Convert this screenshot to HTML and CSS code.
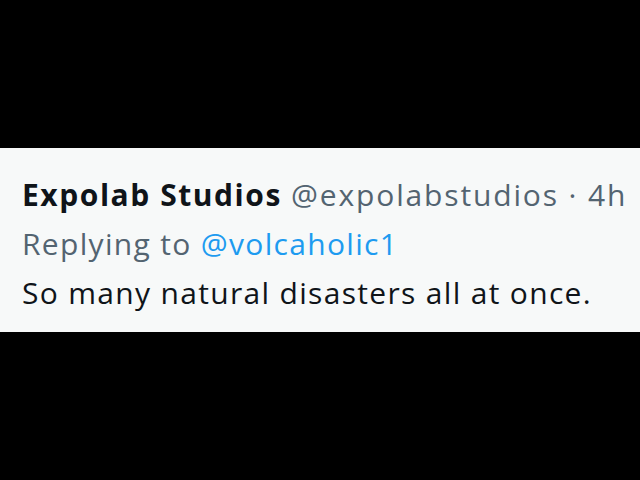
FILE: index.html
```html
<!DOCTYPE html>
<html>
<head>
<meta charset="utf-8">
<link rel="stylesheet" href="styles.css">
</head>
<body>
<main class="stage">
  <article class="tweet">
    <div class="line head"><span class="name">Expolab Studios</span> <span class="meta">@expolabstudios · 4h</span></div>
    <div class="line reply">Replying to <span class="mention">@volcaholic1</span></div>
    <div class="line text">So many natural disasters all at once.</div>
  </article>
</main>
</body>
</html>
```

FILE: styles.css
```css
html, body {
  margin: 0;
  padding: 0;
  background: #000;
}
.stage {
  width: 640px;
  height: 480px;
  display: flex;
  flex-direction: column;
  justify-content: flex-start;
  padding-top: 148px;
  box-sizing: border-box;
}
.tweet {
  background: #f7f9f9;
  height: 184px;
  box-sizing: border-box;
  padding: 22px 0 0 22px;
  font-family: "Open Sans", "Liberation Sans", sans-serif;
  font-size: 30px;
  letter-spacing: 1.32px;
  color: #0f1419;
}
.line {
  line-height: 49px;
  white-space: nowrap;
}
.name {
  font-weight: 700;
  letter-spacing: 1.55px;
}
.meta {
  letter-spacing: 1.85px;
}
.meta, .reply {
  color: #536471;
}
.mention {
  color: #1d9bf0;
}
```
